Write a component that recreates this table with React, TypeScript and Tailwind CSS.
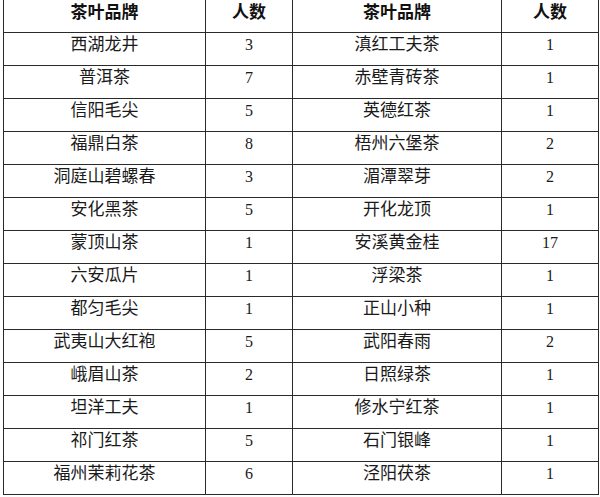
import React from "react";

const rows: [string, string, string, string][] = [
  ["西湖龙井", "3", "滇红工夫茶", "1"],
  ["普洱茶", "7", "赤壁青砖茶", "1"],
  ["信阳毛尖", "5", "英德红茶", "1"],
  ["福鼎白茶", "8", "梧州六堡茶", "2"],
  ["洞庭山碧螺春", "3", "湄潭翠芽", "2"],
  ["安化黑茶", "5", "开化龙顶", "1"],
  ["蒙顶山茶", "1", "安溪黄金桂", "17"],
  ["六安瓜片", "1", "浮梁茶", "1"],
  ["都匀毛尖", "1", "正山小种", "1"],
  ["武夷山大红袍", "5", "武阳春雨", "2"],
  ["峨眉山茶", "2", "日照绿茶", "1"],
  ["坦洋工夫", "1", "修水宁红茶", "1"],
  ["祁门红茶", "5", "石门银峰", "1"],
  ["福州茉莉花茶", "6", "泾阳茯茶", "1"],
];

const widths = ["w-[202px]", "w-[87px]", "w-[209px]", "w-[97px]"];

export default function App() {
  return (
    <div className="w-[600px] h-[497px] bg-white overflow-hidden">
      <div className="ml-[3px] w-[596px] border-l border-[#2a2a2a] flex flex-col">
        <div className="flex h-[33px]">
          {["茶叶品牌", "人数", "茶叶品牌", "人数"].map((t, i) => (
            <div
              key={i}
              className={`${widths[i]} h-[33px] border-r border-b border-[#2a2a2a] flex justify-center pt-[1px] text-[17px] leading-[20px] font-bold text-[#111] [font-family:'Noto_Sans_CJK_SC',sans-serif]`}
            >
              {t}
            </div>
          ))}
        </div>
        {rows.map((r, ri) => (
          <div key={ri} className="flex h-[33px]">
            {r.map((t, i) => (
              <div
                key={i}
                className={`${widths[i]} h-[33px] border-r border-b border-[#2a2a2a] flex justify-center pt-[2px] ${
                  i % 2 === 1 ? "text-[16px]" : "text-[17px]"
                } leading-[20px] text-[#1a1a1a] [font-family:'Liberation_Serif','Noto_Sans_CJK_SC',serif]`}
              >
                {t}
              </div>
            ))}
          </div>
        ))}
      </div>
    </div>
  );
}
